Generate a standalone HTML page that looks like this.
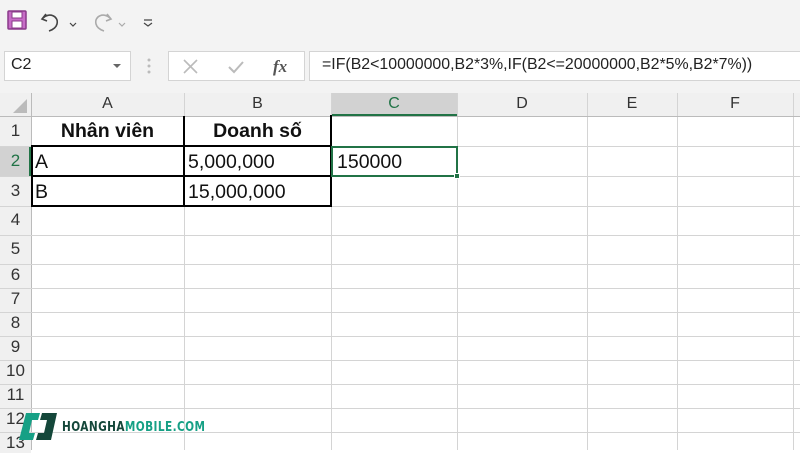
<!DOCTYPE html>
<html><head><meta charset="utf-8"><style>
*{margin:0;padding:0;box-sizing:border-box}
body{width:800px;height:450px;overflow:hidden;background:#fff;font-family:"Segoe UI","Liberation Sans","DejaVu Sans",sans-serif;position:relative}
.abs{position:absolute}
.top{left:0;top:0;width:800px;height:93px;background:#f3f3f3}
.box{background:#fff;border:1px solid #d4d4d4}
.hdr{background:#f0f0f0;color:#333;font-size:15px;text-align:center}
.vl{position:absolute;width:1px;background:#d4d4d4}
.hl{position:absolute;height:1px;background:#d4d4d4}
.t{position:absolute;font-size:19.5px;color:#111;white-space:nowrap}
</style></head><body>
<div class="abs top"></div>
<svg class="abs" style="left:6px;top:8px" width="160" height="24">
<rect x="2" y="3" width="18" height="18" rx="1" fill="#c76cc7" stroke="#8a3a8a" stroke-width="1.5"/>
<rect x="6" y="4" width="10" height="6" fill="#fff" stroke="#8a3a8a"/>
<rect x="6" y="13" width="10" height="7" fill="#fff" stroke="#8a3a8a"/>
<path d="M40 6 l-4 5 l5 2 M37 10 c6-6 16-2 14 6 c-1 4-5 6-8 7" fill="none" stroke="#444" stroke-width="1.6"/>
<path d="M64 15 l3 3 l3-3" fill="none" stroke="#444" stroke-width="1.2"/>
<path d="M101 6 l4 5 l-5 2 M104 10 c-6-6-16-2-14 6 c1 4 5 6 8 7" fill="none" stroke="#aaa" stroke-width="1.6"/>
<path d="M113 15 l3 3 l3-3" fill="none" stroke="#aaa" stroke-width="1.2"/>
<path d="M138 12 h8 M138 15 l4 3 l4-3" fill="none" stroke="#444" stroke-width="1.2"/>
</svg>
<div class="abs box" style="left:4px;top:51px;width:127px;height:30px"></div>
<div class="t" style="left:11px;top:56px;font-size:16px;color:#222">C2</div>
<svg class="abs" style="left:112px;top:62px" width="10" height="8"><path d="M1 2 l4 4 l4-4z" fill="#666"/></svg>
<svg class="abs" style="left:146px;top:57px" width="6" height="20"><circle cx="3" cy="3" r="1.5" fill="#bbb"/><circle cx="3" cy="9" r="1.5" fill="#bbb"/><circle cx="3" cy="15" r="1.5" fill="#bbb"/></svg>
<div class="abs box" style="left:168px;top:51px;width:137px;height:30px"></div>
<svg class="abs" style="left:180px;top:57px" width="120" height="20">
<path d="M4 3 l13 13 M17 3 l-13 13" stroke="#bbb" stroke-width="1.6"/>
<path d="M49 10 l5 5 l9-10" fill="none" stroke="#bbb" stroke-width="2"/>
<text x="93" y="15" font-family="Liberation Serif,serif" font-style="italic" font-weight="bold" font-size="17" fill="#555">fx</text>
</svg>
<div class="abs box" style="left:309px;top:51px;width:495px;height:30px"></div>
<div class="t" style="left:322px;top:56px;font-size:15.9px;color:#222">=IF(B2&lt;10000000,B2*3%,IF(B2&lt;=20000000,B2*5%,B2*7%))</div>
<div class="abs hdr" style="left:0;top:93px;width:800px;height:23px"></div>
<div class="abs hdr" style="left:0;top:93px;width:31px;height:357px"></div>
<svg class="abs" style="left:12px;top:98px" width="16" height="16"><path d="M15 1 V15 H1z" fill="#bbb"/></svg>
<div class="abs" style="left:331px;top:93px;width:126px;height:23px;background:#d2d2d2;border-bottom:2px solid #217346"></div>
<div class="abs" style="left:0;top:146px;width:31px;height:30px;background:#d2d2d2;border-right:2px solid #217346"></div>
<div class="abs hdr" style="left:31px;top:95px;width:153px;font-size:16px">A</div>
<div class="abs hdr" style="left:184px;top:95px;width:147px;font-size:16px">B</div>
<div class="abs hdr" style="left:331px;top:95px;width:126px;color:#217346;background:none;font-size:16px">C</div>
<div class="abs hdr" style="left:457px;top:95px;width:130px;font-size:16px">D</div>
<div class="abs hdr" style="left:587px;top:95px;width:90px;font-size:16px">E</div>
<div class="abs hdr" style="left:677px;top:95px;width:116px;font-size:16px">F</div>
<div class="vl" style="left:31px;top:93px;height:357px;background:#bbb"></div>
<div class="vl" style="left:184px;top:93px;height:357px"></div>
<div class="vl" style="left:331px;top:93px;height:357px"></div>
<div class="vl" style="left:457px;top:93px;height:357px"></div>
<div class="vl" style="left:587px;top:93px;height:357px"></div>
<div class="vl" style="left:677px;top:93px;height:357px"></div>
<div class="vl" style="left:793px;top:93px;height:357px"></div>
<div class="hl" style="left:0;top:116px;width:800px;background:#bbb"></div>
<div class="hl" style="left:0;top:146px;width:800px"></div>
<div class="hl" style="left:0;top:176px;width:800px"></div>
<div class="hl" style="left:0;top:206px;width:800px"></div>
<div class="hl" style="left:0;top:235px;width:800px"></div>
<div class="hl" style="left:0;top:264px;width:800px"></div>
<div class="hl" style="left:0;top:288px;width:800px"></div>
<div class="hl" style="left:0;top:312px;width:800px"></div>
<div class="hl" style="left:0;top:336px;width:800px"></div>
<div class="hl" style="left:0;top:360px;width:800px"></div>
<div class="hl" style="left:0;top:384px;width:800px"></div>
<div class="hl" style="left:0;top:408px;width:800px"></div>
<div class="hl" style="left:0;top:432px;width:800px"></div>
<div class="abs hdr" style="left:0;top:121px;width:31px;font-size:17px">1</div>
<div class="abs hdr" style="left:0;top:151px;width:31px;font-size:17px;background:none;color:#217346">2</div>
<div class="abs hdr" style="left:0;top:181px;width:31px;font-size:17px">3</div>
<div class="abs hdr" style="left:0;top:210px;width:31px;font-size:17px">4</div>
<div class="abs hdr" style="left:0;top:239px;width:31px;font-size:17px">5</div>
<div class="abs hdr" style="left:0;top:265px;width:31px;font-size:17px">6</div>
<div class="abs hdr" style="left:0;top:289px;width:31px;font-size:17px">7</div>
<div class="abs hdr" style="left:0;top:313px;width:31px;font-size:17px">8</div>
<div class="abs hdr" style="left:0;top:337px;width:31px;font-size:17px">9</div>
<div class="abs hdr" style="left:0;top:361px;width:31px;font-size:17px">10</div>
<div class="abs hdr" style="left:0;top:385px;width:31px;font-size:17px">11</div>
<div class="abs hdr" style="left:0;top:409px;width:31px;font-size:17px">12</div>
<div class="abs hdr" style="left:0;top:433px;width:31px;font-size:17px">13</div>
<div class="abs" style="left:31px;top:115px;width:301px;height:92px;border:2px solid #000;border-top:none;border-left:none"></div>
<div class="abs" style="left:31px;top:145px;width:301px;height:2px;background:#000"></div>
<div class="abs" style="left:31px;top:175px;width:301px;height:2px;background:#000"></div>
<div class="abs" style="left:183px;top:116px;width:2px;height:91px;background:#000"></div>
<div class="abs" style="left:31px;top:146px;width:2px;height:61px;background:#000"></div>
<div class="abs" style="left:331px;top:146px;width:127px;height:31px;border:2px solid #217346"></div>
<div class="abs" style="left:454px;top:173px;width:6px;height:6px;background:#217346;border:1px solid #fff"></div>
<div class="t" style="left:31px;top:120px;width:153px;text-align:center;font-weight:bold">Nhân viên</div>
<div class="t" style="left:184px;top:120px;width:147px;text-align:center;font-weight:bold">Doanh số</div>
<div class="t" style="left:35px;top:151px">A</div>
<div class="t" style="left:188px;top:151px">5,000,000</div>
<div class="t" style="left:337px;top:151px">150000</div>
<div class="t" style="left:35px;top:181px">B</div>
<div class="t" style="left:188px;top:181px">15,000,000</div>
<svg class="abs" style="left:18px;top:413px" width="40" height="28">
<path d="M8 0 H22 L20 7 H14 L11 20 H17 L15 27 H1 Z" fill="#16a085"/>
<path d="M24 0 H39 L33 27 H18 L20 20 H26 L29 7 H22 Z" fill="#14473a"/>
</svg>
<div class="t" style="left:62px;top:420px;font-size:13px;font-weight:bold;letter-spacing:0.5px;font-family:'DejaVu Sans',sans-serif;transform:scaleX(0.81);transform-origin:0 0"><span style="color:#14473a">HOANGHA</span><span style="color:#16a085">MOBILE.COM</span></div>
</body></html>
